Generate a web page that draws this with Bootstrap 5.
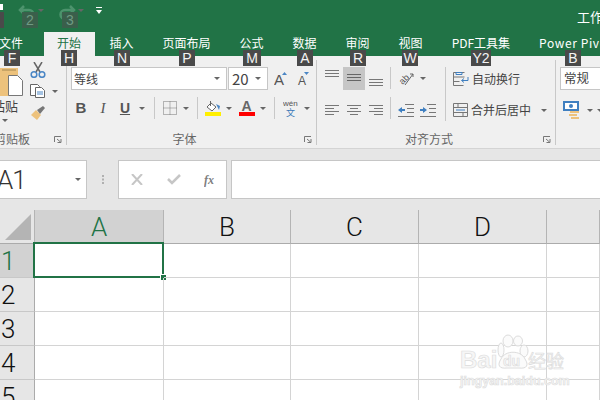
<!DOCTYPE html>
<html lang="zh-CN"><head><meta charset="utf-8"><title>Excel</title>
<link href="https://cdn.jsdelivr.net/npm/bootstrap@5.3.0/dist/css/bootstrap.min.css" rel="stylesheet">
<style>
html,body{margin:0;width:600px;height:400px;overflow:hidden;background:#fff}
body{font-family:"Noto Sans CJK SC","Liberation Sans",sans-serif;font-size:12px;line-height:1;position:relative;color:#444}
svg{display:block;flex:none}
.titlebar{height:32px;background:#217346;color:#fff}
.qa-undo{margin-left:18px;margin-top:4px;opacity:.35}
.qa-redo{margin-left:14px;margin-top:4px;opacity:.35}
.qa-cust{margin-left:12px;margin-top:7px}
.qa-tri{margin-left:2px;margin-top:9px;border-top-color:#7fb095}
.wintitle{position:absolute;left:577px;top:9px;font-size:13px;white-space:nowrap;line-height:16px}
.corner-mark{width:3px;height:6px;background:#fff;position:absolute;left:0;top:4px}
.tabbar{height:24px;background:#217346;color:#fff;white-space:nowrap}
.xtab{padding:0 14.5px;height:24px;line-height:21px;flex:none}
.xtab.first{margin-left:-15.5px}
.xtab.on{background:#f0f0f0;color:#217346;margin-left:6.5px;padding:0 14px 0 13px}
.xtab.spaced{letter-spacing:.6px}
.rib{height:93px;background:#f0f0f0;border-bottom:1px solid #d4d4d4;padding:4px 0 3px}
.grp{border-right:1px solid #c8c8c8;height:85px;padding-top:7px;flex:none;position:relative}
.g1{width:97px;margin-left:-30px}
.g2{width:250px;padding-left:4px}
.g3{width:239px}
.g4{flex:1 1 auto;padding-left:4px;overflow:hidden}
.glabel{margin-top:auto;height:12px;line-height:12px;color:#666;align-items:center}
.launch{margin-right:4px}
.tri{display:inline-block;width:0;height:0;border-left:3px solid transparent;border-right:3px solid transparent;border-top:3px solid #666;flex:none}
.cb1{width:52px}
.paste-ic{margin-left:24px;margin-top:-1px}
.pasteword{font-size:13px;color:#444;padding-left:22px;margin-top:1px;white-space:nowrap;height:17px;line-height:17px}
.pastetri{margin-left:32px;margin-top:5px}
.cb2{margin-left:8px;margin-top:-5px}
.mt6{margin-top:6px}
.mt7{margin-top:7px}
.ml7{margin-left:7px}
.sel-box{height:23px;background:#fff;border:1px solid #c6c6c6;color:#444;padding:0 6px 0 2px;font-size:12px;line-height:20px}
.fontbox{width:156px}
.sizebox{width:40px;margin-left:1px;padding-left:3px;font-size:15px}
.grow-a{margin-left:6px}
.rw2{margin-top:8px;height:20px;align-items:center}
.fmt{width:22px;text-align:center;font-family:"Liberation Serif",serif;font-size:15px;font-weight:700;color:#555;line-height:20px}
.fmt.b{font-family:"Liberation Sans",sans-serif;margin-left:-1px}
.fmt.i{font-style:italic;font-weight:400}
.fmt.u{font-family:"Liberation Sans",sans-serif;text-decoration:underline;font-size:14px}
.vsep{width:1px;background:#c8c8c8;flex:none}
.h20{height:22px}
.ml3{margin-left:3px}.ml4{margin-left:4px}.ml5{margin-left:5px}.ml6{margin-left:6px}.ml8{margin-left:8px}.ml9{margin-left:9px}.ml10{margin-left:10px}
.mid-on{width:22px;height:23px;background:#c6c6c6;display:flex;align-items:center;justify-content:center}
.a-top{margin-left:8px;margin-right:4px;margin-top:3px}
.a-bot{margin-left:4px;margin-top:12px}
.a-row2{margin-top:12px;align-items:center;height:16px}
.a-left{margin-left:8px}
.a-sep1{margin-left:7px;height:22px}
.a-sep2{margin-left:7px;height:22px;margin-top:8px}
.a-col{width:54px;flex:none}
.h23{height:23px}
.vsep54{height:54px}
.wraptxt{font-size:12px;color:#444;margin-left:3px;line-height:16px;white-space:nowrap}
.a-right{margin-left:7px}
.lbl-a{padding-right:2px}
.lbl-f{padding-right:6px}
.numbox{width:60px;border-right:0;padding-left:3px;font-size:12.5px;margin-right:-20px}
.num2{margin-top:11px;padding-left:3px}
.fbar{height:61px;background:#e6e6e6;padding-top:11px}
.fx-box{height:39px;background:#fff;border:1px solid #c6c6c6}
.namebox{width:88px;margin-left:-1px;align-items:center;font-family:Roboto,sans-serif;font-weight:300;font-size:26px;color:#333;padding-right:5px;justify-content:space-between}
.namebox span:first-child{margin-left:-3px;letter-spacing:-1px}
.dots{width:31px;flex:none;padding-top:15px}
.btnbox{width:109px;align-items:center;flex:none;padding-left:12px}
.chk{margin-left:24px}
.fxi{margin-left:23px}
.inbox{flex:1 1 auto;margin-left:4px;border-right:0}
.sheet{display:grid;grid-template-columns:35px 129px 127px 128px 128px 53px;grid-template-rows:34px 34px 34px 34px 34px 34px 22px;height:190px;background:#fff;overflow:hidden}
.hd{background:#e6e6e6;border-right:1px solid #b4b4b4;border-bottom:1px solid #ababab;font-family:Roboto,sans-serif;font-weight:300;font-size:26px;color:#111;display:flex;align-items:center;justify-content:center;overflow:hidden}
.hd.rh{border-right:1px solid #ababab;border-bottom:1px solid #c8c8c8;justify-content:flex-start;padding-left:1px}
.hd.act{background:#d2d2d2;color:#217346}
.cel{border-right:1px solid #d4d4d4;border-bottom:1px solid #d4d4d4;position:relative}
.hd.corner{align-items:flex-end;justify-content:flex-start;padding:0 0 3px 5px}
.picker{position:absolute;left:-2px;top:-2px;right:-1px;bottom:-1px;border:2px solid #217346}
.grip{position:absolute;right:-4px;bottom:-4px;width:7px;height:7px;background:#217346;border:1px solid #fff}
.tip{position:absolute;top:50px;height:16px;line-height:16px;background:#4a4a4a;color:#f4f4f4;font-family:"Liberation Sans",sans-serif;font-size:14px;text-align:center;width:16px}
.tip.dim{top:12px;background:#3a5f4b;color:#6f9a83}
.tip.edge{left:-12px;top:12px}
.tip.wide{width:18px}
.tip.wider{width:20px}
.wm{position:absolute;left:458px;top:332px;width:112px;height:60px;color:#f6f6f6;-webkit-text-stroke:.6px #dcdcdc;pointer-events:none}
.wm-a{position:absolute;left:2px;top:16px;font:700 24px/24px "Liberation Sans",sans-serif}
.wm-b{position:absolute;left:70px;top:17px;font-size:18px;line-height:22px;white-space:nowrap}
.wm-c{position:absolute;left:2px;top:42px;font:700 12.5px/14px "Liberation Sans",sans-serif;white-space:nowrap}
.wm-d{position:absolute;left:45px;top:21px;font:700 14px/16px "Liberation Sans",sans-serif}
</style></head><body>

<div class="titlebar d-flex">
  <svg class="qa-undo" width="18" height="16" viewBox="0 0 18 16" fill="none" stroke="#9fd0b5" stroke-width="2.500"><path d="M6 2 2 6l4 4M2 6h9a4.500 4.500 0 0 1 0 9H8"/></svg>
  <span class="tri qa-tri"></span>
  <svg class="qa-redo" width="18" height="16" viewBox="0 0 18 16" fill="none" stroke="#9fd0b5" stroke-width="2.500"><path d="M12 2l4 4-4 4M16 6H7a4.500 4.500 0 0 0 0 9h3"/></svg>
  <span class="tri qa-tri"></span>
  <svg class="qa-cust" width="6" height="7" viewBox="0 0 6 7"><path d="M0 0h6v1H0zM0 3h6L3 7z" fill="#fff"/></svg>
  <span class="wintitle">工作簿1</span>
</div>
<span class="corner-mark"></span>

<div class="tabbar d-flex">
  <div class="xtab first">文件</div><div class="xtab on">开始</div><div class="xtab">插入</div><div class="xtab">页面布局</div><div class="xtab">公式</div><div class="xtab">数据</div><div class="xtab">审阅</div><div class="xtab">视图</div><div class="xtab">PDF工具集</div><div class="xtab spaced">Power Pivot</div>
</div>

<div class="rib d-flex">
  <div class="grp g1 d-flex flex-column">
    <div class="d-flex">
      <div class="cb1">
        <svg class="paste-ic" width="32" height="30" viewBox="0 0 32 30"><path d="M6 2h18v28H6z" fill="#edc27c"/><path d="M8 3h14v2H8z" fill="#c9a566"/><path d="M14.500 9.500h9l5 5v15h-14z" fill="#fff" stroke="#777"/></svg>
        <div class="pasteword">粘贴</div>
        <span class="tri pastetri d-block"></span>
      </div>
      <div class="cb2">
        <svg width="16" height="16" viewBox="0 0 16 16" fill="none"><path d="M4 0l6 10M12 0 6 10" stroke="#666" stroke-width="1.500"/><circle cx="4" cy="12.500" r="2.800" stroke="#4a86c5" stroke-width="1.500"/><circle cx="12" cy="12.500" r="2.800" stroke="#4a86c5" stroke-width="1.500"/></svg>
        <div class="d-flex align-items-center mt6">
          <svg width="15" height="14" viewBox="0 0 15 14" fill="#fff" stroke="#666"><path d="M.5.500h7l2 2v9H.5z"/><path d="M5.500 3.500h6l3 3v7h-9z"/><path d="M7 8h6M7 10h6" stroke="#4a86c5"/></svg>
          <span class="tri ml7"></span>
        </div>
        <svg class="mt7" width="16" height="16" viewBox="0 0 16 16"><path d="M1 10l5-5 5 5-4 5z" fill="#edc27c"/><path d="M7 5l6-4 2 2-5 6z" fill="#777"/></svg>
      </div>
    </div>
    <div class="glabel d-flex"><span class="flex-grow-1 text-center">剪贴板</span>
      <svg class="launch" width="8" height="7" viewBox="0 0 8 7" fill="none" stroke="#777"><path d="M.5 6V.5H7M3 3l3.500 3M3.500 6.500h3.500V3"/></svg></div>
  </div>

  <div class="grp g2 d-flex flex-column">
    <div class="d-flex align-items-center">
      <div class="sel-box fontbox d-flex align-items-center justify-content-between"><span>等线</span><span class="tri"></span></div>
      <div class="sel-box sizebox d-flex align-items-center justify-content-between"><span>20</span><span class="tri"></span></div>
      <svg class="grow-a" width="16" height="20" viewBox="0 0 16 20"><text x="0" y="16" font-family="Liberation Sans" font-size="15" fill="#555">A</text><path d="M8 6l2.500-3L13 6z" fill="#4a86c5"/></svg>
      <svg class="ml6" width="16" height="20" viewBox="0 0 16 20"><text x="2" y="16" font-family="Liberation Sans" font-size="12" fill="#555">A</text><path d="M8 3h5l-2.500 3z" fill="#4a86c5"/></svg>
    </div>
    <div class="d-flex rw2">
      <div class="fmt b">B</div><div class="fmt i">I</div><div class="fmt u">U</div><span class="tri ml3"></span>
      <span class="vsep h20 ml9"></span>
      <svg class="ml8" width="14" height="14" viewBox="0 0 14 14" fill="none" stroke="#777" stroke-dasharray="1 1"><path d="M.5.500h13v13H.5zM.5 7h13M7 .5v13"/></svg>
      <span class="tri ml6"></span>
      <span class="vsep h20 ml8"></span>
      <svg class="ml7" width="16" height="16" viewBox="0 0 16 16"><path d="M2 7l4-4 5 4-4 4z" fill="#fff" stroke="#666"/><path d="M5 1h1v5H5z" fill="#666"/><path d="M11 4l4 2-1 4z" fill="#4a86c5"/><path d="M0 12h16v4H0z" fill="#ffef00"/></svg>
      <span class="tri ml5"></span>
      <svg class="ml7" width="16" height="18" viewBox="0 0 16 18"><text x="2.500" y="12" font-family="Liberation Sans" font-weight="700" font-size="14" fill="#666">A</text><path d="M0 13h16v4H0z" fill="#f00"/></svg>
      <span class="tri ml5"></span>
      <span class="vsep h20 ml8"></span>
      <svg class="ml8" width="16" height="18" viewBox="0 0 16 18"><text x="0" y="7" font-family="Liberation Sans" font-size="8" fill="#555">wén</text><text x="3" y="17" font-family="Noto Sans CJK SC" font-size="9" fill="#3a78b8">文</text></svg>
      <span class="tri ml5"></span>
    </div>
    <div class="glabel d-flex"><span class="flex-grow-1 text-center lbl-f">字体</span>
      <svg class="launch" width="8" height="7" viewBox="0 0 8 7" fill="none" stroke="#777"><path d="M.5 6V.5H7M3 3l3.500 3M3.500 6.500h3.500V3"/></svg></div>
  </div>

  <div class="grp g3 d-flex flex-column">
    <div class="d-flex">
      <div>
        <div class="d-flex h23">
          <svg class="a-top" width="14" height="9" viewBox="0 0 14 9" stroke="#777"><path d="M0 .5h14M0 3.500h14M0 6.500h14"/></svg>
          <div class="mid-on"><svg width="14" height="9" viewBox="0 0 14 9" stroke="#666"><path d="M0 .5h14M0 3.500h14M0 6.500h14"/></svg></div>
          <svg class="a-bot" width="14" height="9" viewBox="0 0 14 9" stroke="#777"><path d="M0 .5h14M0 3.500h14M0 6.500h14"/></svg>
        </div>
        <div class="d-flex a-row2">
          <svg class="a-left" width="14" height="11" viewBox="0 0 14 11" stroke="#777"><path d="M0 .5h14M0 3.500h9M0 6.500h14M0 9.500h9"/></svg>
          <svg class="a-left" width="14" height="11" viewBox="0 0 14 11" stroke="#777"><path d="M0 .5h14M3 3.500h8M0 6.500h14M3 9.500h8"/></svg>
          <svg class="a-left" width="14" height="11" viewBox="0 0 14 11" stroke="#777"><path d="M0 .5h14M5 3.500h9M0 6.500h14M5 9.500h9"/></svg>
        </div>
      </div>
      <div class="d-flex flex-column">
        <span class="vsep a-sep1"></span><span class="vsep a-sep2"></span>
      </div>
      <div class="a-col">
        <div class="d-flex align-items-center ml7 h23">
          <svg width="16" height="17" viewBox="0 0 16 17"><text x="0" y="12" transform="rotate(-45 6 8)" font-family="Liberation Sans" font-size="9" fill="#555">ab</text><path d="M7 15 15 4M12 4h3v3" fill="none" stroke="#666"/></svg>
          <span class="tri ml6"></span>
        </div>
        <div class="d-flex a-row2 ml7">
          <svg width="16" height="13" viewBox="0 0 16 13"><path d="M7 .5h9M9 4.500h7M9 8.500h7M0 12.500h16" stroke="#777"/><path d="M0 6l4-3v2h3v2H4v2z" fill="#3f7fc0"/></svg>
          <svg class="ml6" width="16" height="13" viewBox="0 0 16 13"><path d="M7 .5h9M9 4.500h7M9 8.500h7M0 12.500h16" stroke="#777"/><path d="M7 6 3 3v2H0v2h3v2z" fill="#3f7fc0"/></svg>
        </div>
      </div>
      <span class="vsep vsep54"></span>
      <div class="a-right flex-grow-1">
        <div class="d-flex align-items-center h23">
          <svg width="16" height="14" viewBox="0 0 16 14" fill="none"><path d="M.5 .5h11M.5 5h11M.5 9.500h6M.5 13.500h10M.5.500v13" stroke="#777"/><path d="M3 .5h6v2H3z" stroke="#3f7fc0"/><path d="M15 5v3.500H9M11 6.500 8.500 8.500 11 10.500" stroke="#3f7fc0"/></svg>
          <span class="wraptxt">自动换行</span>
        </div>
        <div class="d-flex a-row2 align-items-center">
          <svg width="15" height="14" viewBox="0 0 15 14" fill="none" stroke="#777"><path d="M.5.500h14v13H.5zM.5 4.500h14M.5 9.500h14M5 .5v4M10 9.500v4"/><path d="M3 7h9" stroke="#3f7fc0"/></svg>
          <span class="wraptxt ml4">合并后居中</span>
          <span class="tri ml10"></span>
        </div>
      </div>
    </div>
    <div class="glabel d-flex"><span class="flex-grow-1 text-center lbl-a">对齐方式</span>
      <svg class="launch" width="8" height="7" viewBox="0 0 8 7" fill="none" stroke="#777"><path d="M.5 6V.5H7M3 3l3.500 3M3.500 6.500h3.500V3"/></svg></div>
  </div>

  <div class="grp g4 border-0">
    <div class="sel-box numbox">常规</div>
    <div class="d-flex align-items-center num2">
      <svg width="18" height="18" viewBox="0 0 18 18"><path d="M1 1h14v8H1z" fill="#fff" stroke="#3f7fc0" stroke-width="2"/><circle cx="8" cy="5" r="2" fill="#3f7fc0"/><path d="M7 10h9v2H7zM6 13h8v2H6zM8 16h8v2H8z" fill="#edc27c"/></svg>
      <span class="tri ml6"></span>
      <span class="tri ml4"></span>
    </div>
  </div>
</div>

<div class="fbar d-flex">
  <div class="fx-box namebox d-flex"><span>A1</span><span class="tri"></span></div>
  <div class="dots"><svg class="mx-auto" width="2" height="9" viewBox="0 0 2 9" fill="#b0b0b0"><path d="M0 0h2v2H0zM0 3.500h2v2H0zM0 7h2v2H0z"/></svg></div>
  <div class="fx-box btnbox d-flex">
    <svg width="12" height="11" viewBox="0 0 12 11" stroke="#c6c6c6" stroke-width="2"><path d="M1 0l10 11M11 0 1 11"/></svg>
    <svg class="chk" width="14" height="11" viewBox="0 0 14 11" fill="none" stroke="#c6c6c6" stroke-width="2.500"><path d="M1 5l4 4 8-8"/></svg>
    <svg class="fxi" width="13" height="14" viewBox="0 0 13 14"><text x="0" y="11" font-family="Liberation Serif" font-style="italic" font-weight="700" font-size="12" fill="#808080">fx</text></svg>
  </div>
  <div class="fx-box inbox"></div>
</div>

<div class="sheet">
  <div class="hd corner"><svg width="26" height="26" viewBox="0 0 26 26"><path d="M26 0v26H0z" fill="#b4b4b4"/></svg></div>
  <div class="hd act">A</div><div class="hd">B</div><div class="hd">C</div><div class="hd">D</div><div class="hd"></div>
  <div class="hd rh act">1</div><div class="cel"><div class="picker"></div><div class="grip"></div></div><div class="cel"></div><div class="cel"></div><div class="cel"></div><div class="cel"></div>
  <div class="hd rh">2</div><div class="cel"></div><div class="cel"></div><div class="cel"></div><div class="cel"></div><div class="cel"></div>
  <div class="hd rh">3</div><div class="cel"></div><div class="cel"></div><div class="cel"></div><div class="cel"></div><div class="cel"></div>
  <div class="hd rh">4</div><div class="cel"></div><div class="cel"></div><div class="cel"></div><div class="cel"></div><div class="cel"></div>
  <div class="hd rh">5</div><div class="cel"></div><div class="cel"></div><div class="cel"></div><div class="cel"></div><div class="cel"></div>
</div>

<span class="tip dim" style="left:22px">2</span><span class="tip dim" style="left:62px">3</span>
<span class="tip edge"></span>
<span class="tip" style="left:4px">F</span><span class="tip" style="left:61px">H</span><span class="tip" style="left:114px">N</span><span class="tip" style="left:179px">P</span><span class="tip wide" style="left:243px">M</span><span class="tip" style="left:297px">A</span><span class="tip" style="left:350px">R</span><span class="tip" style="left:402px">W</span><span class="tip wider" style="left:471px">Y2</span><span class="tip" style="left:565px">B</span>

<div class="wm">
  <svg class="position-absolute top-0 start-0" width="112" height="46" viewBox="0 0 112 46" fill="#fbfbfb" stroke="#dcdcdc"><ellipse cx="43" cy="18" rx="3" ry="7"/><ellipse cx="50" cy="9" rx="5" ry="6"/><ellipse cx="60" cy="9" rx="4.500" ry="5"/><ellipse cx="66" cy="19" rx="4" ry="6"/><path d="M43 27c4-9 20-9 24 0 4 6 2 10-6 9H49c-8 1-10-3-6-9z"/></svg>
  <span class="wm-a">Bai</span><span class="wm-d">du</span><span class="wm-b">经验</span><span class="wm-c">jingyan.baidu.com</span>
</div>
</body></html>
